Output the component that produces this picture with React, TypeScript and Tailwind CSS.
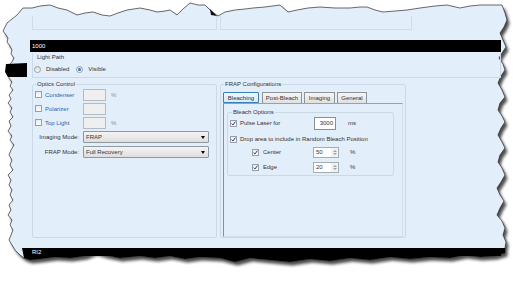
import React from "react";

type Pt = [number, number];

const topEdge: Pt[] = [
  [17, 15], [23, 8], [32, 8], [40, 6], [50, 5], [58, 8], [67, 10], [77, 15], [85, 13], [93, 12],
  [102, 15], [110, 16], [118, 13], [127, 10], [140, 8], [150, 10], [157, 12], [165, 11], [170, 10],
  [177, 15], [183, 9], [190, 3], [198, 5], [205, 5], [212, 12], [218, 16], [225, 12], [235, 10],
  [245, 9], [253, 8], [265, 7], [280, 5], [288, 12], [297, 10], [308, 8], [320, 7], [335, 8],
  [350, 8], [360, 7], [367, 7], [375, 10], [383, 12], [395, 11], [407, 10], [420, 8], [435, 6],
  [447, 5], [460, 8], [470, 6], [480, 5], [490, 5], [502, 5],
];

const rightEdge: Pt[] = [
  [505, 13], [507, 20], [504, 27], [500, 33], [503, 40], [506, 47], [502, 53], [499, 58], [503, 64],
  [505, 70], [501, 76], [498, 83], [502, 90], [505, 97], [500, 103], [498, 110], [502, 116], [505, 122],
  [501, 128], [498, 135], [502, 142], [505, 148], [500, 155], [498, 162], [502, 168], [505, 175],
  [501, 182], [497, 188], [500, 195], [504, 201], [500, 208], [497, 215], [502, 221], [505, 228],
  [503, 235], [506, 242], [505, 248], [505, 253],
];

const bottomEdge: Pt[] = [
  [495, 256], [480, 257], [465, 255], [450, 258], [430, 257], [410, 259], [390, 257], [370, 260],
  [350, 258], [330, 261], [310, 259], [290, 262], [270, 260], [250, 258], [235, 262], [220, 258],
  [200, 257], [185, 259], [170, 256], [155, 258], [140, 256], [120, 258], [105, 255], [95, 252],
  [85, 256], [70, 258], [55, 257], [40, 259], [30, 260], [24, 258],
];

const leftEdge: Pt[] = [
  [20, 255], [15, 250], [12, 245], [9, 240], [11, 235], [13, 230], [10, 225], [12, 220], [8, 215],
  [11, 210], [9, 205], [13, 200], [10, 195], [12, 190], [9, 185], [11, 180], [8, 175], [13, 170],
  [10, 165], [12, 160], [9, 155], [11, 150], [14, 145], [10, 140], [12, 136], [8, 131], [11, 126],
  [9, 121], [13, 117], [10, 112], [12, 108], [8, 103], [11, 99], [9, 95], [13, 90], [10, 86],
  [12, 82], [9, 78], [7, 74], [10, 70], [8, 66], [12, 62], [14, 58], [11, 54], [12, 50], [10, 46],
  [7, 42], [8, 38], [6, 35], [3, 31], [5, 27], [7, 23], [12, 19],
];

const toPath = (pts: Pt[]) =>
  "M" + pts.map(([x, y]) => `${x},${y}`).join(" L") + " Z";

const paperPath = toPath([...topEdge, ...rightEdge, ...bottomEdge, ...leftEdge]);
const bandPath = toPath([[22, 248], [505, 248], [505, 253], ...bottomEdge]);

function TornPaper() {
  return (
    <svg className="absolute inset-0" width="522" height="282" viewBox="0 0 522 282">
      <defs>
        <filter id="shadow" x="-10%" y="-10%" width="120%" height="120%">
          <feGaussianBlur stdDeviation="1.6" />
        </filter>
      </defs>
      <path d={paperPath} transform="translate(2.5,3.5)" fill="#000" opacity="0.7" filter="url(#shadow)" />
      <path d={paperPath} fill="#e3eefb" stroke="#2a2a2a" strokeWidth="0.7" />
      <path d={bandPath} fill="#000" />
      <path d="M6,64 L27,63 L27,77 L8,77 L5,72 Z" fill="#000" />
      <path d="M210,9 L217,16 L211,15 Z" fill="#111" />
    </svg>
  );
}

function CheckBox({ checked = false }: { checked?: boolean }) {
  return (
    <span className="w-[7px] h-[7px] shrink-0 border border-[#9a9fa5] bg-gradient-to-b from-[#e9ecef] to-[#fbfbfb] flex items-center justify-center">
      {checked && (
        <svg width="5" height="5" viewBox="0 0 5 5">
          <path d="M0.6,2.6 L1.9,4 L4.4,0.7" fill="none" stroke="#23407a" strokeWidth="1" />
        </svg>
      )}
    </span>
  );
}

function Radio({ selected = false }: { selected?: boolean }) {
  return (
    <span className="w-[7px] h-[7px] shrink-0 rounded-full border border-[#9aa0a6] bg-gradient-to-b from-[#d9dde1] to-[#f8f8f8] flex items-center justify-center">
      {selected && <span className="w-[3px] h-[3px] rounded-full bg-[#2c7bc4]" />}
    </span>
  );
}

function Select({ value }: { value: string }) {
  return (
    <div className="w-[126px] h-[12px] border border-[#8f979f] rounded-[1px] bg-gradient-to-b from-[#f4f4f4] to-[#dedede] flex items-center justify-between pl-[2px] pr-[3px]">
      <span>{value}</span>
      <span className="w-0 h-0 border-l-[2px] border-r-[2px] border-t-[3px] border-l-transparent border-r-transparent border-t-black" />
    </div>
  );
}

function SpinBox({ value }: { value: string }) {
  return (
    <div className="w-[26px] h-[11px] border border-[#a4acb4] bg-white flex">
      <span className="flex-1 pl-[2px] leading-[9px]">{value}</span>
      <div className="w-[7px] flex flex-col items-center justify-center gap-[1px] bg-[#f0f2f4]">
        <span className="w-0 h-0 border-l-[2px] border-r-[2px] border-b-[2px] border-l-transparent border-r-transparent border-b-[#9aa2aa]" />
        <span className="w-0 h-0 border-l-[2px] border-r-[2px] border-t-[2px] border-l-transparent border-r-transparent border-t-[#9aa2aa]" />
      </div>
    </div>
  );
}

function Tab({ label, active = false, width }: { label: string; active?: boolean; width: string }) {
  return (
    <div
      className={
        active
          ? `${width} h-[11px] border border-[#3d7fb3] rounded-t-[1px] bg-gradient-to-b from-[#edf7fe] to-[#d4ebfa] flex items-center justify-center`
          : `${width} h-[11px] border border-b-0 border-[#8c939a] rounded-t-[1px] bg-gradient-to-b from-[#f6f6f6] to-[#e0e0e0] flex items-center justify-center`
      }
    >
      {label}
    </div>
  );
}

const opticsRows = [
  { label: "Condenser", pct: true },
  { label: "Polarizer", pct: false },
  { label: "Top Light", pct: true },
];

export default function App() {
  return (
    <div className="relative w-[522px] h-[282px] overflow-hidden bg-white font-['Liberation_Sans',Arial,sans-serif] text-[6px] leading-[8px] text-[#333]">
      <TornPaper />

      <div className="relative pl-[30px] pr-[21px] pt-[16px]">
        {/* faint boxes torn off at the top */}
        <div className="flex h-[14px]">
          <div className="ml-[2px] w-[185px] border-x border-b border-[#d0dcea]" />
          <div className="ml-[3px] w-[192px] border-x border-b border-[#d0dcea]" />
        </div>

        {/* title bar */}
        <div className="mt-[10px] h-[12px] bg-black text-white pl-[2px] leading-[12px]">1000</div>

        {/* Light Path */}
        <div className="mt-[1px] ml-[2px] h-[25px] border-x border-b border-[#cbd8e6]">
          <div className="pl-[4px]">Light Path</div>
          <div className="mt-[4px] h-[8px] pl-[1px] flex items-center">
            <Radio />
            <span className="ml-[5px]">Disabled</span>
            <span className="ml-[7px]"><Radio selected /></span>
            <span className="ml-[5px]">Visible</span>
          </div>
        </div>

        <div className="mt-[2px] flex">
          {/* Optics Control */}
          <fieldset className="ml-[2px] w-[185px] h-[158px] border border-[#cbd8e6] rounded-[2px] px-[2px]">
            <legend className="ml-[1px] px-[1px]">Optics Control</legend>
            <div className="flex flex-col gap-[1px]">
              {opticsRows.map((r) => (
                <div key={r.label} className="h-[13px] flex items-center">
                  <CheckBox />
                  <span className="ml-[3px] w-[38px] text-[#2f5fae]">{r.label}</span>
                  <span className="w-[23px] h-[12px] border border-[#b3bcc5] bg-[#efefef]" />
                  {r.pct && <span className="ml-[5px] text-[#8a8f95]">%</span>}
                </div>
              ))}
            </div>
            <div className="mt-[2px] flex items-center">
              <span className="w-[44px] text-right mr-[4px]">Imaging Mode:</span>
              <Select value="FRAP" />
            </div>
            <div className="mt-[3px] flex items-center">
              <span className="w-[44px] text-right mr-[4px]">FRAP Mode:</span>
              <Select value="Full Recovery" />
            </div>
          </fieldset>

          {/* FRAP Configurations */}
          <fieldset className="ml-[3px] w-[186px] h-[158px] border border-[#cbd8e6] rounded-[2px] px-[2px]">
            <legend className="ml-[1px] px-[1px]">FRAP Configurations</legend>
            <div className="mt-[4px] flex items-end">
              <Tab label="Bleaching" active width="w-[36px]" />
              <span className="ml-[3px]"><Tab label="Post-Bleach" width="w-[40px]" /></span>
              <span className="ml-[2px]"><Tab label="Imaging" width="w-[31px]" /></span>
              <span className="ml-[2px]"><Tab label="General" width="w-[30px]" /></span>
            </div>
            <div className="h-[134px] border-l border-t border-l-[#878e95] border-t-[#9aa1a8] border-r border-b border-r-[#d3dde8] border-b-[#d3dde8] pl-[3px] pt-[4px]">
              <fieldset className="w-[167px] h-[68px] border border-[#cbd8e6] rounded-[2px] pl-[2px]">
                <legend className="ml-[2px] px-[1px]">Bleach Options</legend>
                <div className="h-[14px] flex items-center">
                  <CheckBox checked />
                  <span className="ml-[3px] w-[74px]">Pulse Laser for</span>
                  <span className="w-[22px] h-[13px] border border-[#8a8f94] bg-white text-right pr-[2px] leading-[11px]">3000</span>
                  <span className="ml-[12px]">ms</span>
                </div>
                <div className="mt-[2px] h-[14px] flex items-center">
                  <CheckBox checked />
                  <span className="ml-[3px]">Drop area to include in Random Bleach Position</span>
                </div>
                <div className="h-[12px] pl-[22px] flex items-center">
                  <CheckBox checked />
                  <span className="ml-[4px] w-[50px]">Center</span>
                  <SpinBox value="50" />
                  <span className="ml-[11px]">%</span>
                </div>
                <div className="mt-[3px] h-[12px] pl-[22px] flex items-center">
                  <CheckBox checked />
                  <span className="ml-[4px] w-[50px]">Edge</span>
                  <SpinBox value="20" />
                  <span className="ml-[11px]">%</span>
                </div>
              </fieldset>
            </div>
          </fieldset>
        </div>

        {/* status bar */}
        <div className="mt-[10px] h-[8px] bg-black text-white pl-[2px] leading-[9px]">RI2</div>
      </div>
    </div>
  );
}
